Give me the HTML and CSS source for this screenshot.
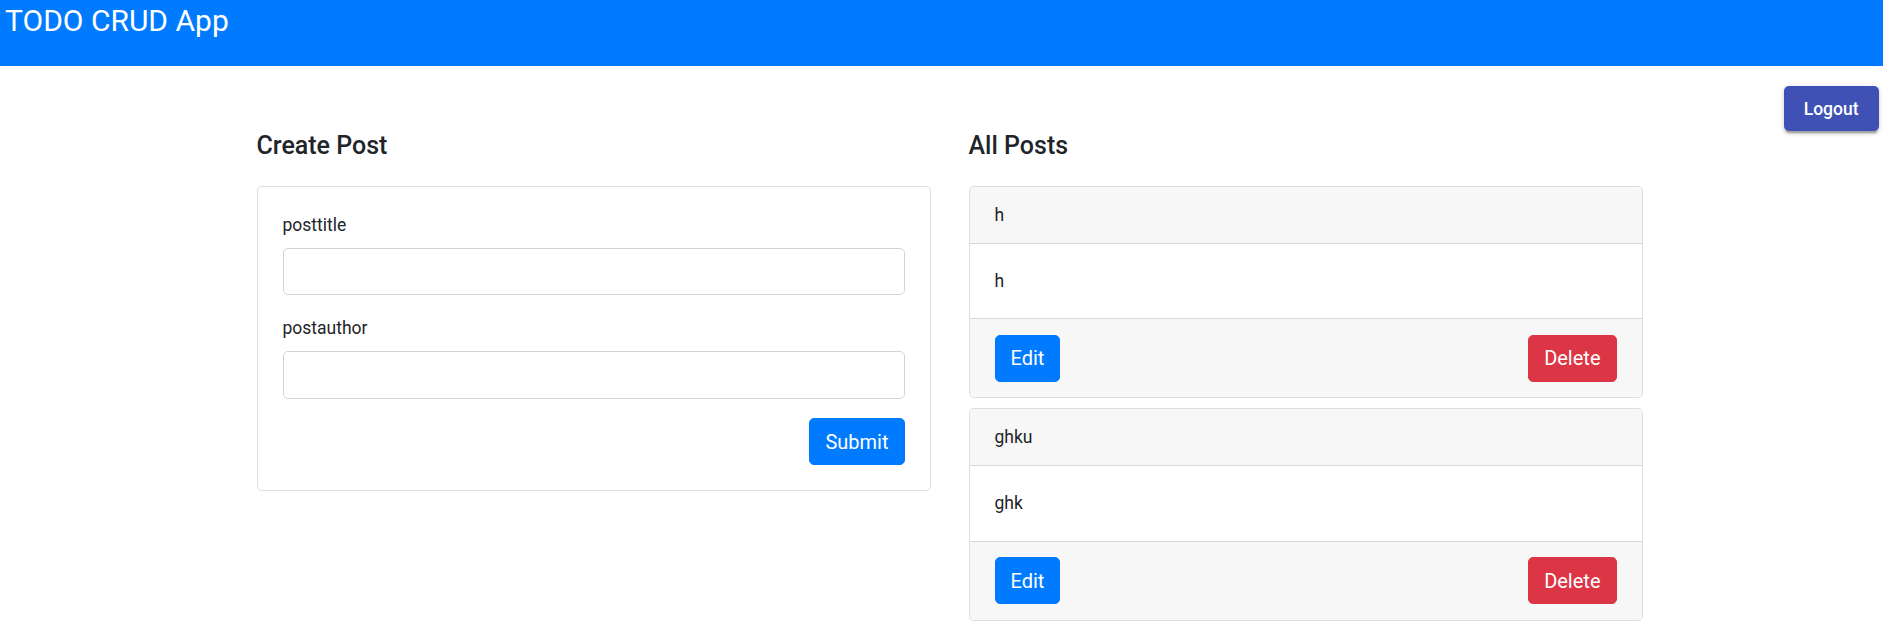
FILE: index.html
```html
<!DOCTYPE html>
<html lang="en">
<head>
<meta charset="utf-8">
<title>TODO CRUD App</title>
<link rel="stylesheet" href="styles.css">
</head>
<body>
<header class="topbar">
  <h1 class="brand">TODO CRUD App</h1>
</header>
<div class="toolbar">
  <button class="logout" type="button">Logout</button>
</div>
<main class="content">
  <section class="col">
    <h2 class="section-title">Create Post</h2>
    <div class="card">
      <form class="card-body">
        <div class="form-group">
          <label class="label" for="posttitle">posttitle</label>
          <input class="input" id="posttitle" type="text">
        </div>
        <div class="form-group">
          <label class="label" for="postauthor">postauthor</label>
          <input class="input" id="postauthor" type="text">
        </div>
        <div class="form-actions">
          <button class="btn btn-primary" type="button">Submit</button>
        </div>
      </form>
    </div>
  </section>
  <section class="col">
    <h2 class="section-title">All Posts</h2>
    <div class="card post">
      <div class="card-header">h</div>
      <div class="card-body post-body">h</div>
      <div class="card-footer">
        <button class="btn btn-primary" type="button">Edit</button>
        <button class="btn btn-danger" type="button">Delete</button>
      </div>
    </div>
    <div class="card post">
      <div class="card-header">ghku</div>
      <div class="card-body post-body">ghk</div>
      <div class="card-footer">
        <button class="btn btn-primary" type="button">Edit</button>
        <button class="btn btn-danger" type="button">Delete</button>
      </div>
    </div>
  </section>
</main>
</body>
</html>
```
FILE: styles.css
```css
* {
  box-sizing: border-box;
}

html, body {
  margin: 0;
  padding: 0;
  background: #fff;
}

body {
  font-family: Roboto, "Liberation Sans", Arial, sans-serif;
  font-size: 17.5px;
  line-height: 1.5;
  color: #212529;
}

.topbar {
  height: 66px;
  background: #007bff;
  padding: 2.5px 5px 0;
}

.brand {
  margin: 0;
  font-size: 30px;
  font-weight: 400;
  line-height: 36px;
  color: #fff;
}

.toolbar {
  display: flex;
  justify-content: flex-end;
  margin-top: 20px;
  padding-right: 4.5px;
}

.logout {
  font-family: Roboto, "Liberation Sans", Arial, sans-serif;
  font-size: 17.5px;
  font-weight: 500;
  line-height: 30px;
  padding: 7.5px 20px;
  border: 0;
  border-radius: 5px;
  background: #3f51b5;
  color: #fff;
  box-shadow: 0 3.75px 1.25px -2.5px rgba(0, 0, 0, 0.2),
              0 2.5px 2.5px 0 rgba(0, 0, 0, 0.14),
              0 1.25px 6.25px 0 rgba(0, 0, 0, 0.12);
}

.content {
  display: flex;
  gap: 38px;
  width: 1386px;
  margin-left: 256.5px;
}

.col {
  flex: 1 1 0;
  min-width: 0;
}

.section-title {
  margin: 0 0 24.5px;
  font-size: 25px;
  font-weight: 500;
  line-height: 30px;
  color: #212529;
}

.card {
  border: 1.25px solid rgba(0, 0, 0, 0.125);
  border-radius: 5px;
  background: #fff;
  overflow: hidden;
}

.post {
  margin-bottom: 10px;
}

.card-body {
  padding: 25px;
}

.post-body {
  padding: 24px 25px;
}

.card-header {
  padding: 15px 25px;
  background: #f7f7f7;
  border-bottom: 1.25px solid rgba(0, 0, 0, 0.125);
}

.card-footer {
  display: flex;
  justify-content: space-between;
  padding: 15.5px 25px;
  background: #f7f7f7;
  border-top: 1.25px solid rgba(0, 0, 0, 0.125);
}

.form-group {
  margin-bottom: 19.5px;
}

.label {
  display: block;
  margin-bottom: 10px;
}

.input {
  display: block;
  width: 100%;
  height: 47.5px;
  padding: 7.5px 15px;
  font-family: inherit;
  font-size: 20px;
  color: #495057;
  background: #fff;
  border: 1.25px solid #ced4da;
  border-radius: 5px;
}

.form-actions {
  display: flex;
  justify-content: flex-end;
}

.btn {
  font-family: Roboto, "Liberation Sans", Arial, sans-serif;
  font-size: 20px;
  font-weight: 400;
  line-height: 30px;
  padding: 7.5px 15px;
  border: 1.25px solid transparent;
  border-radius: 5px;
  color: #fff;
}

.btn-primary {
  background: #007bff;
  border-color: #007bff;
}

.btn-danger {
  background: #dc3545;
  border-color: #dc3545;
}
```
